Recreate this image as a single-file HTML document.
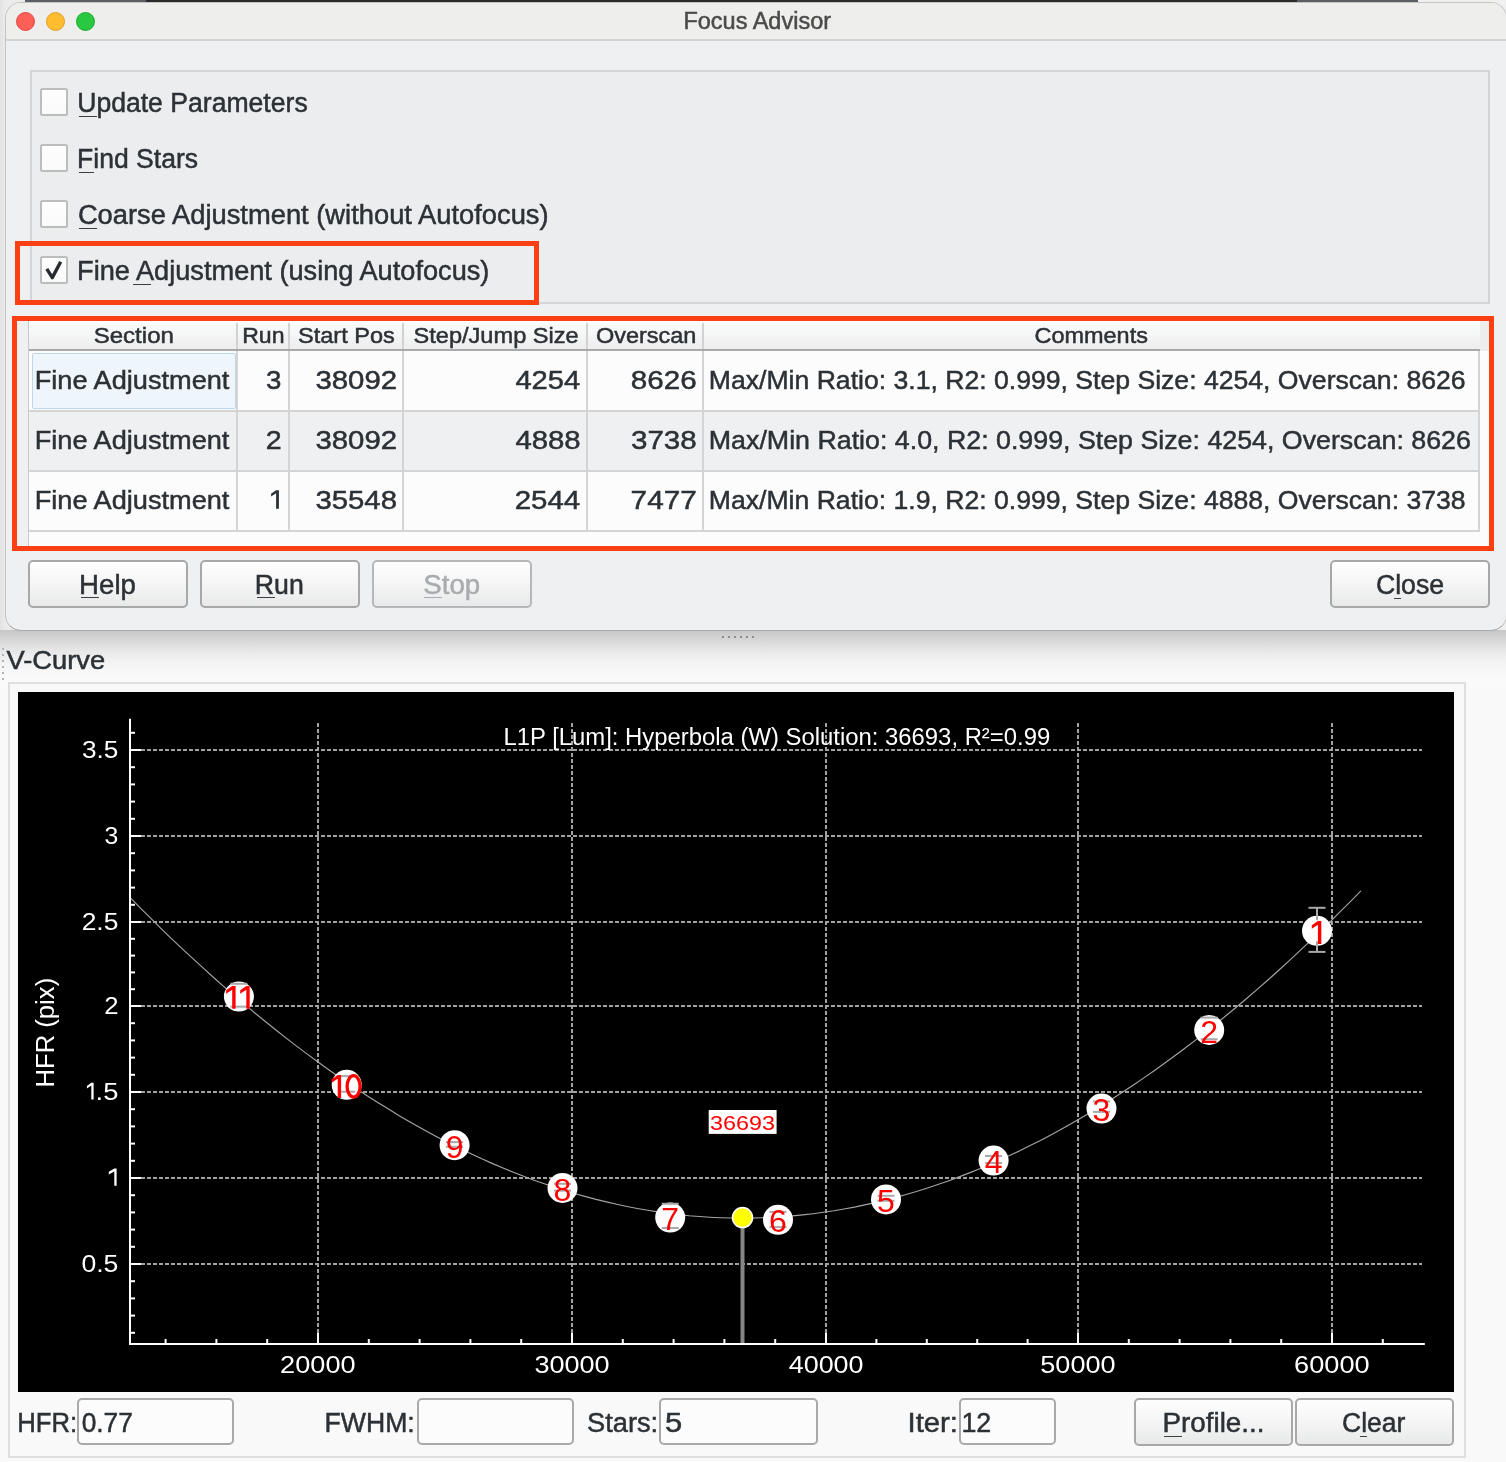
<!DOCTYPE html>
<html><head><meta charset="utf-8"><title>Focus Advisor</title>
<style>
html,body{margin:0;padding:0;width:1506px;height:1462px;overflow:hidden;background:#f9f9f9;font-family:"Liberation Sans",sans-serif;position:relative}
div{position:absolute;box-sizing:border-box}
.desk{left:0;top:0;width:1506px;height:640px;background:linear-gradient(90deg,#e2e2e2,#ebebeb 5px,#f0f0f0)}
.topstrip{left:146px;top:0;width:1151px;height:2.5px;background:#2a2a2a}
.topstrip2{left:1297px;top:0;width:121px;height:2.5px;background:#5a5d62}
.shadow{left:0;top:630px;width:1506px;height:62px;background:linear-gradient(180deg,#c6c6c6 0,#cacaca 2px,#d6d6d6 10px,#e4e4e4 18px,#ededed 26px,#f4f4f4 34px,#f8f8f8 42px,#fafafa 50px,#f9f9f9 62px)}
.win{left:5px;top:2px;width:1502px;height:629px;background:#eff0f2;border:1px solid #c4c4c4;border-bottom:1.5px solid #a9a9a9;border-radius:16px;overflow:hidden}
.titlebar{left:0;top:0;width:100%;height:38px;border-bottom:2px solid #d2d2d2;background:#eeeeec}
.tl{width:19px;height:19px;border-radius:50%;top:8.5px}
.group{left:30px;top:70px;width:1460px;height:234px;background:#ecedef;border:2px solid #d4d5d7;border-right-color:#d2d3d5}
.cb{width:28px;height:28px;background:linear-gradient(#fdfdfd,#fafafa);border:2px solid #bcbebd;border-radius:2.5px}
.red{border:5px solid #fd3f14}
.table{left:28px;top:321px;width:1461px;height:225px;background:#fcfcfc;border-left:1.5px solid #c9c9c9}
.hdr{top:0;height:30px;background:linear-gradient(#fafbfb,#f5f6f6 45%,#ededee);border-bottom:2px solid #a9a9a9}
.hsep{top:2px;width:2px;height:26px;background:#d2d2d2}
.row2{left:0;top:90px;width:1461px;height:60px;background:#eff0f2}
.hline{height:1.5px;background:#d4d4d4}
.vline{width:1.5px;background:#d4d4d4}
.btn{height:47.5px;border:2px solid #a8a8a8;border-radius:5px;background:linear-gradient(#fefefe,#f6f6f6 45%,#e8e9ea)}
.btn.dis{border-color:#b5b7b8}
.inp{height:47px;border:2px solid #a9a9a9;border-radius:5px;background:#fcfcfc}
.frame{left:8px;top:682px;width:1458px;height:776px;border:2px solid #dfdfdf;background:#f9f9f9}
.plot{left:18px;top:692px;width:1436px;height:700px;background:#000}
.ul{height:1.3px;background:#3a3f44}
svg{position:absolute;left:0;top:0;will-change:transform}
text{font-family:"Liberation Sans",sans-serif}
</style></head><body>
<div class="desk"></div>
<div class="shadow"></div>
<div class="topstrip"></div><div class="topstrip2"></div><div class="topstrip2" style="left:25px;width:121px"></div>
<div class="win">
  <div class="titlebar"></div>
  <div class="tl" style="left:9.5px;background:#fe5f57;border:1px solid #e2463f"></div>
  <div class="tl" style="left:39.5px;background:#febc2e;border:1px solid #e0a02a"></div>
  <div class="tl" style="left:69.5px;background:#28c840;border:1px solid #1eaa32"></div>
</div>
<div class="group"></div>
<div class="cb" style="left:40px;top:88px"></div>
<div class="cb" style="left:40px;top:144px"></div>
<div class="cb" style="left:40px;top:200px"></div>
<div class="cb" style="left:40px;top:256px"></div>
<div class="red" style="left:15px;top:241px;width:524px;height:64px"></div>

<div class="table">
  <div class="row2" style="width:1450px"></div>
  <div class="hdr" style="left:0;width:1451px"></div>
  <div class="hdr" style="left:1451px;width:10px;background:#ededee;border-bottom:none"></div>
  <div class="hsep" style="left:207px"></div>
  <div class="hsep" style="left:259px"></div>
  <div class="hsep" style="left:373px"></div>
  <div class="hsep" style="left:557px"></div>
  <div class="hsep" style="left:673px"></div>
  <div class="hline" style="left:0;top:89px;width:1451px"></div>
  <div class="hline" style="left:0;top:149px;width:1451px"></div>
  <div class="hline" style="left:0;top:209px;width:1451px"></div>
  <div class="vline" style="left:207px;top:30px;height:180px"></div>
  <div class="vline" style="left:259px;top:30px;height:180px"></div>
  <div class="vline" style="left:373px;top:30px;height:180px"></div>
  <div class="vline" style="left:557px;top:30px;height:180px"></div>
  <div class="vline" style="left:673px;top:30px;height:180px"></div>
  <div class="vline" style="left:1449px;top:30px;height:180px"></div>
  <div style="left:3px;top:32px;width:204px;height:56px;border:1.5px solid #b9d9ea;background:#eef5fb;border-radius:2px"></div>
</div>
<div class="red" style="left:12px;top:316px;width:1482px;height:235px"></div>

<div class="btn" style="left:28px;top:560px;width:160px"></div>
<div class="btn" style="left:200px;top:560px;width:160px"></div>
<div class="btn dis" style="left:372px;top:560px;width:160px"></div>
<div class="btn" style="left:1330px;top:560px;width:160px"></div>
<div class="ul" style="left:81px;top:597px;width:18px"></div>
<div class="ul" style="left:257px;top:597px;width:18px"></div>
<div class="ul" style="left:424px;top:597px;width:18px;background:#a9acaf"></div>
<div class="ul" style="left:1394px;top:598px;width:7px"></div>

<div class="ul" style="left:79px;top:116px;width:18px"></div>
<div class="ul" style="left:79px;top:172px;width:15px"></div>
<div class="ul" style="left:79px;top:228px;width:18px"></div>
<div class="ul" style="left:133px;top:284px;width:18px"></div>

<div style="left:722px;top:636px;width:32px;height:2px;background:repeating-linear-gradient(90deg,#8e8e8e 0 2px,transparent 2px 6px)"></div>
<div style="left:2px;top:648px;width:2px;height:33px;background:repeating-linear-gradient(180deg,#b5b5b5 0 2px,transparent 2px 6px)"></div>

<div class="frame"></div>
<div class="plot"></div>

<div class="inp" style="left:76.5px;top:1398px;width:157px"></div>
<div class="inp" style="left:416.5px;top:1398px;width:157px"></div>
<div class="inp" style="left:658.5px;top:1398px;width:159px"></div>
<div class="inp" style="left:958.5px;top:1398px;width:97px"></div>
<div class="btn" style="left:1134px;top:1398px;width:159px"></div>
<div class="btn" style="left:1294.5px;top:1398px;width:159px"></div>
<div class="ul" style="left:1164px;top:1436px;width:18px"></div>
<div class="ul" style="left:1360px;top:1436px;width:7px"></div>

<svg width="1506" height="1462" viewBox="0 0 1506 1462">
<g id="chart">
<line x1="318.0" y1="723" x2="318.0" y2="1333" stroke="#a3a3a3" stroke-width="2" stroke-dasharray="4 2"/>
<line x1="572.0" y1="723" x2="572.0" y2="1333" stroke="#a3a3a3" stroke-width="2" stroke-dasharray="4 2"/>
<line x1="826.0" y1="723" x2="826.0" y2="1333" stroke="#a3a3a3" stroke-width="2" stroke-dasharray="4 2"/>
<line x1="1078.0" y1="723" x2="1078.0" y2="1333" stroke="#a3a3a3" stroke-width="2" stroke-dasharray="4 2"/>
<line x1="1332.0" y1="723" x2="1332.0" y2="1333" stroke="#a3a3a3" stroke-width="2" stroke-dasharray="4 2"/>
<line x1="141" y1="1264.0" x2="1422" y2="1264.0" stroke="#a3a3a3" stroke-width="2" stroke-dasharray="4 2"/>
<line x1="141" y1="1178.0" x2="1422" y2="1178.0" stroke="#a3a3a3" stroke-width="2" stroke-dasharray="4 2"/>
<line x1="141" y1="1092.0" x2="1422" y2="1092.0" stroke="#a3a3a3" stroke-width="2" stroke-dasharray="4 2"/>
<line x1="141" y1="1006.0" x2="1422" y2="1006.0" stroke="#a3a3a3" stroke-width="2" stroke-dasharray="4 2"/>
<line x1="141" y1="922.0" x2="1422" y2="922.0" stroke="#a3a3a3" stroke-width="2" stroke-dasharray="4 2"/>
<line x1="141" y1="836.0" x2="1422" y2="836.0" stroke="#a3a3a3" stroke-width="2" stroke-dasharray="4 2"/>
<line x1="141" y1="750.0" x2="1422" y2="750.0" stroke="#a3a3a3" stroke-width="2" stroke-dasharray="4 2"/>
<line x1="130" y1="718.8" x2="130" y2="1345" stroke="#fff" stroke-width="2"/>
<line x1="129" y1="1344" x2="1424.8" y2="1344" stroke="#fff" stroke-width="2"/>
<line x1="130" y1="1332.8" x2="135" y2="1332.8" stroke="#fff" stroke-width="2"/>
<line x1="130" y1="1315.6" x2="135" y2="1315.6" stroke="#fff" stroke-width="2"/>
<line x1="130" y1="1298.4" x2="135" y2="1298.4" stroke="#fff" stroke-width="2"/>
<line x1="130" y1="1281.2" x2="135" y2="1281.2" stroke="#fff" stroke-width="2"/>
<line x1="130" y1="1264.0" x2="141" y2="1264.0" stroke="#fff" stroke-width="2"/>
<line x1="130" y1="1246.8" x2="135" y2="1246.8" stroke="#fff" stroke-width="2"/>
<line x1="130" y1="1229.6" x2="135" y2="1229.6" stroke="#fff" stroke-width="2"/>
<line x1="130" y1="1212.4" x2="135" y2="1212.4" stroke="#fff" stroke-width="2"/>
<line x1="130" y1="1195.2" x2="135" y2="1195.2" stroke="#fff" stroke-width="2"/>
<line x1="130" y1="1178.0" x2="141" y2="1178.0" stroke="#fff" stroke-width="2"/>
<line x1="130" y1="1160.8" x2="135" y2="1160.8" stroke="#fff" stroke-width="2"/>
<line x1="130" y1="1143.6" x2="135" y2="1143.6" stroke="#fff" stroke-width="2"/>
<line x1="130" y1="1126.4" x2="135" y2="1126.4" stroke="#fff" stroke-width="2"/>
<line x1="130" y1="1109.2" x2="135" y2="1109.2" stroke="#fff" stroke-width="2"/>
<line x1="130" y1="1092.0" x2="141" y2="1092.0" stroke="#fff" stroke-width="2"/>
<line x1="130" y1="1074.8" x2="135" y2="1074.8" stroke="#fff" stroke-width="2"/>
<line x1="130" y1="1057.6" x2="135" y2="1057.6" stroke="#fff" stroke-width="2"/>
<line x1="130" y1="1040.4" x2="135" y2="1040.4" stroke="#fff" stroke-width="2"/>
<line x1="130" y1="1023.2" x2="135" y2="1023.2" stroke="#fff" stroke-width="2"/>
<line x1="130" y1="1006.0" x2="141" y2="1006.0" stroke="#fff" stroke-width="2"/>
<line x1="130" y1="989.2" x2="135" y2="989.2" stroke="#fff" stroke-width="2"/>
<line x1="130" y1="972.4" x2="135" y2="972.4" stroke="#fff" stroke-width="2"/>
<line x1="130" y1="955.6" x2="135" y2="955.6" stroke="#fff" stroke-width="2"/>
<line x1="130" y1="938.8" x2="135" y2="938.8" stroke="#fff" stroke-width="2"/>
<line x1="130" y1="922.0" x2="141" y2="922.0" stroke="#fff" stroke-width="2"/>
<line x1="130" y1="904.8" x2="135" y2="904.8" stroke="#fff" stroke-width="2"/>
<line x1="130" y1="887.6" x2="135" y2="887.6" stroke="#fff" stroke-width="2"/>
<line x1="130" y1="870.4" x2="135" y2="870.4" stroke="#fff" stroke-width="2"/>
<line x1="130" y1="853.2" x2="135" y2="853.2" stroke="#fff" stroke-width="2"/>
<line x1="130" y1="836.0" x2="141" y2="836.0" stroke="#fff" stroke-width="2"/>
<line x1="130" y1="818.8" x2="135" y2="818.8" stroke="#fff" stroke-width="2"/>
<line x1="130" y1="801.6" x2="135" y2="801.6" stroke="#fff" stroke-width="2"/>
<line x1="130" y1="784.4" x2="135" y2="784.4" stroke="#fff" stroke-width="2"/>
<line x1="130" y1="767.2" x2="135" y2="767.2" stroke="#fff" stroke-width="2"/>
<line x1="130" y1="750.0" x2="141" y2="750.0" stroke="#fff" stroke-width="2"/>
<line x1="130" y1="732.8" x2="135" y2="732.8" stroke="#fff" stroke-width="2"/>
<line x1="165.6" y1="1344" x2="165.6" y2="1339" stroke="#fff" stroke-width="2"/>
<line x1="216.4" y1="1344" x2="216.4" y2="1339" stroke="#fff" stroke-width="2"/>
<line x1="267.2" y1="1344" x2="267.2" y2="1339" stroke="#fff" stroke-width="2"/>
<line x1="318.0" y1="1344" x2="318.0" y2="1333" stroke="#fff" stroke-width="2"/>
<line x1="368.8" y1="1344" x2="368.8" y2="1339" stroke="#fff" stroke-width="2"/>
<line x1="419.6" y1="1344" x2="419.6" y2="1339" stroke="#fff" stroke-width="2"/>
<line x1="470.4" y1="1344" x2="470.4" y2="1339" stroke="#fff" stroke-width="2"/>
<line x1="521.2" y1="1344" x2="521.2" y2="1339" stroke="#fff" stroke-width="2"/>
<line x1="572.0" y1="1344" x2="572.0" y2="1333" stroke="#fff" stroke-width="2"/>
<line x1="622.8" y1="1344" x2="622.8" y2="1339" stroke="#fff" stroke-width="2"/>
<line x1="673.6" y1="1344" x2="673.6" y2="1339" stroke="#fff" stroke-width="2"/>
<line x1="724.4" y1="1344" x2="724.4" y2="1339" stroke="#fff" stroke-width="2"/>
<line x1="775.2" y1="1344" x2="775.2" y2="1339" stroke="#fff" stroke-width="2"/>
<line x1="826.0" y1="1344" x2="826.0" y2="1333" stroke="#fff" stroke-width="2"/>
<line x1="876.4" y1="1344" x2="876.4" y2="1339" stroke="#fff" stroke-width="2"/>
<line x1="926.8" y1="1344" x2="926.8" y2="1339" stroke="#fff" stroke-width="2"/>
<line x1="977.2" y1="1344" x2="977.2" y2="1339" stroke="#fff" stroke-width="2"/>
<line x1="1027.6" y1="1344" x2="1027.6" y2="1339" stroke="#fff" stroke-width="2"/>
<line x1="1078.0" y1="1344" x2="1078.0" y2="1333" stroke="#fff" stroke-width="2"/>
<line x1="1128.8" y1="1344" x2="1128.8" y2="1339" stroke="#fff" stroke-width="2"/>
<line x1="1179.6" y1="1344" x2="1179.6" y2="1339" stroke="#fff" stroke-width="2"/>
<line x1="1230.4" y1="1344" x2="1230.4" y2="1339" stroke="#fff" stroke-width="2"/>
<line x1="1281.2" y1="1344" x2="1281.2" y2="1339" stroke="#fff" stroke-width="2"/>
<line x1="1332.0" y1="1344" x2="1332.0" y2="1333" stroke="#fff" stroke-width="2"/>
<line x1="1382.8" y1="1344" x2="1382.8" y2="1339" stroke="#fff" stroke-width="2"/>
<text x="82.0" y="758.1" font-size="23.5" fill="#fff" textLength="36.4" lengthAdjust="spacingAndGlyphs">3.5</text>
<text x="104.6" y="844.1" font-size="23.5" fill="#fff" textLength="13.8" lengthAdjust="spacingAndGlyphs">3</text>
<text x="81.7" y="930.1" font-size="23.5" fill="#fff" textLength="36.7" lengthAdjust="spacingAndGlyphs">2.5</text>
<text x="104.3" y="1014.1" font-size="23.5" fill="#fff" textLength="14.3" lengthAdjust="spacingAndGlyphs">2</text>
<text x="95.6" y="1100.1" font-size="23.5" fill="#fff" textLength="22.8" lengthAdjust="spacingAndGlyphs">.5</text>
<text x="81.4" y="1272.1" font-size="23.5" fill="#fff" textLength="37.0" lengthAdjust="spacingAndGlyphs">0.5</text>
<text x="280.1" y="1372.6" font-size="24" fill="#fff" textLength="75.5" lengthAdjust="spacingAndGlyphs">20000</text>
<text x="534.4" y="1372.6" font-size="24" fill="#fff" textLength="75.3" lengthAdjust="spacingAndGlyphs">30000</text>
<text x="788.7" y="1372.6" font-size="24" fill="#fff" textLength="74.9" lengthAdjust="spacingAndGlyphs">40000</text>
<text x="1040.3" y="1372.6" font-size="24" fill="#fff" textLength="75.3" lengthAdjust="spacingAndGlyphs">50000</text>
<text x="1294.1" y="1372.6" font-size="24" fill="#fff" textLength="75.6" lengthAdjust="spacingAndGlyphs">60000</text>
<polyline points="130.9,898.4 141.2,908.9 151.6,919.2 161.9,929.3 172.2,939.3 182.6,949.1 192.9,958.7 203.3,968.2 213.6,977.5 223.9,986.6 234.3,995.6 244.6,1004.4 254.9,1013.0 265.3,1021.5 275.6,1029.8 285.9,1037.9 296.3,1045.9 306.6,1053.6 317.0,1061.3 327.3,1068.7 337.6,1076.0 348.0,1083.0 358.3,1090.0 368.6,1096.7 379.0,1103.3 389.3,1109.6 399.6,1115.9 410.0,1121.9 420.3,1127.7 430.6,1133.4 441.0,1138.9 451.3,1144.2 461.7,1149.3 472.0,1154.3 482.3,1159.1 492.7,1163.6 503.0,1168.0 513.3,1172.3 523.7,1176.3 534.0,1180.2 544.3,1183.8 554.7,1187.3 565.0,1190.6 575.4,1193.7 585.7,1196.6 596.0,1199.4 606.4,1201.9 616.7,1204.3 627.0,1206.5 637.4,1208.5 647.7,1210.3 658.0,1211.9 668.4,1213.4 678.7,1214.6 689.1,1215.7 699.4,1216.5 709.7,1217.2 720.1,1217.7 730.4,1218.0 740.7,1218.1 751.1,1218.1 761.4,1217.8 771.7,1217.4 782.1,1216.7 792.4,1215.9 802.7,1214.9 813.1,1213.7 823.4,1212.3 833.8,1210.8 844.1,1209.0 854.4,1207.1 864.8,1204.9 875.1,1202.6 885.4,1200.1 895.8,1197.4 906.1,1194.5 916.4,1191.5 926.8,1188.2 937.1,1184.8 947.5,1181.2 957.8,1177.4 968.1,1173.4 978.5,1169.2 988.8,1164.9 999.1,1160.3 1009.5,1155.6 1019.8,1150.7 1030.1,1145.6 1040.5,1140.4 1050.8,1134.9 1061.2,1129.3 1071.5,1123.5 1081.8,1117.5 1092.2,1111.4 1102.5,1105.0 1112.8,1098.5 1123.2,1091.8 1133.5,1085.0 1143.8,1077.9 1154.2,1070.7 1164.5,1063.3 1174.8,1055.7 1185.2,1048.0 1195.5,1040.1 1205.9,1032.0 1216.2,1023.8 1226.5,1015.3 1236.9,1006.8 1247.2,998.0 1257.5,989.1 1267.9,980.0 1278.2,970.7 1288.5,961.3 1298.9,951.7 1309.2,941.9 1319.6,932.0 1329.9,922.0 1340.2,911.7 1350.6,901.3 1360.9,890.8" fill="none" stroke="#a4a4a4" stroke-width="1.15"/>
<line x1="742.5" y1="1217.6" x2="742.5" y2="1343" stroke="#858585" stroke-width="4"/>
<line x1="1317" y1="907.8" x2="1317" y2="920.3" stroke="#a9a9a9" stroke-width="2"/>
<line x1="1317" y1="941.3" x2="1317" y2="951.9" stroke="#a9a9a9" stroke-width="2"/>
<circle cx="1317" cy="930.8" r="15" fill="#fff"/>
<line x1="1317" y1="915.8" x2="1317" y2="920.3" stroke="#a9a9a9" stroke-width="2"/>
<line x1="1317" y1="941.3" x2="1317" y2="945.8" stroke="#a9a9a9" stroke-width="2"/>
<line x1="1308.5" y1="907.8" x2="1325.5" y2="907.8" stroke="#a9a9a9" stroke-width="2"/>
<line x1="1308.5" y1="951.9" x2="1325.5" y2="951.9" stroke="#a9a9a9" stroke-width="2"/>
<path d="M1317.90 920.90L1321.30 920.90L1321.30 943.90L1317.90 943.90L1317.90 924.70L1311.80 928.70L1311.80 925.20Z" fill="#ff0000"/>
<line x1="1209.2" y1="1017.6" x2="1209.2" y2="1019.5" stroke="#a9a9a9" stroke-width="2"/>
<circle cx="1209.2" cy="1030" r="15" fill="#fff"/>
<line x1="1200.7" y1="1017.6" x2="1217.7" y2="1017.6" stroke="#a9a9a9" stroke-width="2"/>
<line x1="1200.7" y1="1039.2" x2="1217.7" y2="1039.2" stroke="#a9a9a9" stroke-width="2"/>
<text x="1209.2" y="1042.6" font-size="32" fill="#ff0000" text-anchor="middle">2</text>
<circle cx="1101.5" cy="1108.6" r="15" fill="#fff"/>
<line x1="1093.0" y1="1101.5" x2="1110.0" y2="1101.5" stroke="#a9a9a9" stroke-width="2"/>
<line x1="1093.0" y1="1111.9" x2="1110.0" y2="1111.9" stroke="#a9a9a9" stroke-width="2"/>
<text x="1101.5" y="1121.2" font-size="32" fill="#ff0000" text-anchor="middle">3</text>
<circle cx="993.6" cy="1160.6" r="15" fill="#fff"/>
<line x1="985.1" y1="1156" x2="1002.1" y2="1156" stroke="#a9a9a9" stroke-width="2"/>
<line x1="985.1" y1="1163" x2="1002.1" y2="1163" stroke="#a9a9a9" stroke-width="2"/>
<text x="993.6" y="1173.2" font-size="32" fill="#ff0000" text-anchor="middle">4</text>
<circle cx="886" cy="1199.4" r="15" fill="#fff"/>
<line x1="877.5" y1="1195.8" x2="894.5" y2="1195.8" stroke="#a9a9a9" stroke-width="2"/>
<line x1="877.5" y1="1200.8" x2="894.5" y2="1200.8" stroke="#a9a9a9" stroke-width="2"/>
<text x="886.0" y="1212.0" font-size="32" fill="#ff0000" text-anchor="middle">5</text>
<circle cx="778" cy="1219.8" r="15" fill="#fff"/>
<line x1="769.5" y1="1211.9" x2="786.5" y2="1211.9" stroke="#a9a9a9" stroke-width="2"/>
<line x1="769.5" y1="1227.1" x2="786.5" y2="1227.1" stroke="#a9a9a9" stroke-width="2"/>
<text x="778.0" y="1232.4" font-size="32" fill="#ff0000" text-anchor="middle">6</text>
<line x1="670.2" y1="1203.8" x2="670.2" y2="1207.1" stroke="#a9a9a9" stroke-width="2"/>
<circle cx="670.2" cy="1217.6" r="15" fill="#fff"/>
<line x1="661.7" y1="1203.8" x2="678.7" y2="1203.8" stroke="#a9a9a9" stroke-width="2"/>
<line x1="661.7" y1="1228" x2="678.7" y2="1228" stroke="#a9a9a9" stroke-width="2"/>
<text x="670.2" y="1230.2" font-size="32" fill="#ff0000" text-anchor="middle">7</text>
<circle cx="562.5" cy="1188" r="15" fill="#fff"/>
<line x1="554.0" y1="1183.8" x2="571.0" y2="1183.8" stroke="#a9a9a9" stroke-width="2"/>
<line x1="554.0" y1="1190.7" x2="571.0" y2="1190.7" stroke="#a9a9a9" stroke-width="2"/>
<text x="562.5" y="1200.6" font-size="32" fill="#ff0000" text-anchor="middle">8</text>
<circle cx="454.6" cy="1145.2" r="15" fill="#fff"/>
<line x1="446.1" y1="1142.1" x2="463.1" y2="1142.1" stroke="#a9a9a9" stroke-width="2"/>
<line x1="446.1" y1="1146.8" x2="463.1" y2="1146.8" stroke="#a9a9a9" stroke-width="2"/>
<text x="454.6" y="1157.8" font-size="32" fill="#ff0000" text-anchor="middle">9</text>
<circle cx="346.7" cy="1084.8" r="15" fill="#fff"/>
<line x1="338.2" y1="1076.1" x2="355.2" y2="1076.1" stroke="#a9a9a9" stroke-width="2"/>
<line x1="338.2" y1="1091.7" x2="355.2" y2="1091.7" stroke="#a9a9a9" stroke-width="2"/>
<path d="M337.70 1075.00L341.10 1075.00L341.10 1097.90L337.70 1097.90L337.70 1078.78L331.60 1082.77L331.60 1079.28Z" fill="#ff0000"/>
<ellipse cx="353.6" cy="1086.4" rx="6.5" ry="10.7" fill="none" stroke="#ff0000" stroke-width="3.3"/>
<line x1="238.9" y1="983.8" x2="238.9" y2="986.1" stroke="#a9a9a9" stroke-width="2"/>
<circle cx="238.9" cy="996.6" r="15" fill="#fff"/>
<line x1="230.4" y1="983.8" x2="247.4" y2="983.8" stroke="#a9a9a9" stroke-width="2"/>
<line x1="230.4" y1="1006.7" x2="247.4" y2="1006.7" stroke="#a9a9a9" stroke-width="2"/>
<path d="M232.20 986.00L235.60 986.00L235.60 1008.80L232.20 1008.80L232.20 989.77L226.10 993.73L226.10 990.26Z" fill="#ff0000"/>
<path d="M246.30 986.00L249.70 986.00L249.70 1008.80L246.30 1008.80L246.30 989.77L240.20 993.73L240.20 990.26Z" fill="#ff0000"/>
<circle cx="742.5" cy="1217.6" r="10" fill="#ffff00" stroke="#fff" stroke-width="1.5"/>
<rect x="708.7" y="1110" width="67.9" height="23.9" fill="#fff"/>
<path d="M114.30 1168.60L116.60 1168.60L116.60 1185.80L114.30 1185.80L114.30 1171.44L108.80 1174.43L108.80 1171.82Z" fill="#fff"/>
<path d="M91.30 1082.80L93.60 1082.80L93.60 1099.60L91.30 1099.60L91.30 1085.58L86.90 1088.50L86.90 1085.94Z" fill="#fff"/>
<text x="503.5" y="745.0" font-size="23.5" fill="#fff" textLength="546.7" lengthAdjust="spacingAndGlyphs">L1P [Lum]: Hyperbola (W) Solution: 36693, R²=0.99</text>
<text x="710.0" y="1129.8" font-size="20" fill="#ff0000" textLength="64.9" lengthAdjust="spacingAndGlyphs">36693</text>
<g transform="translate(54,1085.4) rotate(-90)"><text x="-2.2" y="0.0" font-size="26.5" fill="#fff" textLength="109.8" lengthAdjust="spacingAndGlyphs">HFR (pix)</text></g>
</g>
<g id="texts">
<text x="683.4" y="28.7" font-size="23" fill="#4b4b4b" stroke="#4b4b4b" stroke-width="0.5" textLength="147.7" lengthAdjust="spacingAndGlyphs">Focus Advisor</text>
<text x="77.2" y="112.0" font-size="27" fill="#2c3136" stroke="#2c3136" stroke-width="0.5" textLength="230.5" lengthAdjust="spacingAndGlyphs">Update Parameters</text>
<text x="77.1" y="168.0" font-size="27" fill="#2c3136" stroke="#2c3136" stroke-width="0.5" textLength="120.9" lengthAdjust="spacingAndGlyphs">Find Stars</text>
<text x="77.9" y="224.0" font-size="27" fill="#2c3136" stroke="#2c3136" stroke-width="0.5" textLength="470.7" lengthAdjust="spacingAndGlyphs">Coarse Adjustment (without Autofocus)</text>
<text x="77.1" y="280.0" font-size="27" fill="#2c3136" stroke="#2c3136" stroke-width="0.5" textLength="412.3" lengthAdjust="spacingAndGlyphs">Fine Adjustment (using Autofocus)</text>
<text x="93.7" y="342.9" font-size="22.5" fill="#2c3136" stroke="#2c3136" stroke-width="0.5" textLength="80.2" lengthAdjust="spacingAndGlyphs">Section</text>
<text x="242.2" y="342.9" font-size="22.5" fill="#2c3136" stroke="#2c3136" stroke-width="0.5" textLength="42.3" lengthAdjust="spacingAndGlyphs">Run</text>
<text x="298.0" y="342.9" font-size="22.5" fill="#2c3136" stroke="#2c3136" stroke-width="0.5" textLength="96.8" lengthAdjust="spacingAndGlyphs">Start Pos</text>
<text x="413.5" y="342.9" font-size="22.5" fill="#2c3136" stroke="#2c3136" stroke-width="0.5" textLength="165.2" lengthAdjust="spacingAndGlyphs">Step/Jump Size</text>
<text x="595.9" y="342.9" font-size="22.5" fill="#2c3136" stroke="#2c3136" stroke-width="0.5" textLength="100.5" lengthAdjust="spacingAndGlyphs">Overscan</text>
<text x="1034.5" y="342.9" font-size="22.5" fill="#2c3136" stroke="#2c3136" stroke-width="0.5" textLength="113.4" lengthAdjust="spacingAndGlyphs">Comments</text>
<text x="34.7" y="389.4" font-size="26.5" fill="#2c3136" stroke="#2c3136" stroke-width="0.5" textLength="194.7" lengthAdjust="spacingAndGlyphs">Fine Adjustment</text>
<text x="266.0" y="389.4" font-size="26.5" fill="#2c3136" stroke="#2c3136" stroke-width="0.5" textLength="15.4" lengthAdjust="spacingAndGlyphs">3</text>
<text x="315.4" y="389.4" font-size="26.5" fill="#2c3136" stroke="#2c3136" stroke-width="0.5" textLength="81.7" lengthAdjust="spacingAndGlyphs">38092</text>
<text x="515.4" y="389.4" font-size="26.5" fill="#2c3136" stroke="#2c3136" stroke-width="0.5" textLength="64.8" lengthAdjust="spacingAndGlyphs">4254</text>
<text x="630.8" y="389.4" font-size="26.5" fill="#2c3136" stroke="#2c3136" stroke-width="0.5" textLength="65.8" lengthAdjust="spacingAndGlyphs">8626</text>
<text x="708.8" y="389.4" font-size="26.5" fill="#2c3136" stroke="#2c3136" stroke-width="0.5" textLength="756.8" lengthAdjust="spacingAndGlyphs">Max/Min Ratio: 3.1, R2: 0.999, Step Size: 4254, Overscan: 8626</text>
<text x="34.7" y="449.2" font-size="26.5" fill="#2c3136" stroke="#2c3136" stroke-width="0.5" textLength="194.7" lengthAdjust="spacingAndGlyphs">Fine Adjustment</text>
<text x="265.7" y="449.2" font-size="26.5" fill="#2c3136" stroke="#2c3136" stroke-width="0.5" textLength="15.9" lengthAdjust="spacingAndGlyphs">2</text>
<text x="315.4" y="449.2" font-size="26.5" fill="#2c3136" stroke="#2c3136" stroke-width="0.5" textLength="81.7" lengthAdjust="spacingAndGlyphs">38092</text>
<text x="515.4" y="449.2" font-size="26.5" fill="#2c3136" stroke="#2c3136" stroke-width="0.5" textLength="65.2" lengthAdjust="spacingAndGlyphs">4888</text>
<text x="631.0" y="449.2" font-size="26.5" fill="#2c3136" stroke="#2c3136" stroke-width="0.5" textLength="65.7" lengthAdjust="spacingAndGlyphs">3738</text>
<text x="708.8" y="449.2" font-size="26.5" fill="#2c3136" stroke="#2c3136" stroke-width="0.5" textLength="762.1" lengthAdjust="spacingAndGlyphs">Max/Min Ratio: 4.0, R2: 0.999, Step Size: 4254, Overscan: 8626</text>
<text x="34.7" y="509.0" font-size="26.5" fill="#2c3136" stroke="#2c3136" stroke-width="0.5" textLength="194.7" lengthAdjust="spacingAndGlyphs">Fine Adjustment</text>
<path d="M276.10 490.30L278.90 490.30L278.90 508.70L276.10 508.70L276.10 493.34L271.10 496.54L271.10 493.74Z" fill="#2c3136"/>
<text x="315.4" y="509.0" font-size="26.5" fill="#2c3136" stroke="#2c3136" stroke-width="0.5" textLength="81.6" lengthAdjust="spacingAndGlyphs">35548</text>
<text x="514.7" y="509.0" font-size="26.5" fill="#2c3136" stroke="#2c3136" stroke-width="0.5" textLength="65.5" lengthAdjust="spacingAndGlyphs">2544</text>
<text x="630.6" y="509.0" font-size="26.5" fill="#2c3136" stroke="#2c3136" stroke-width="0.5" textLength="66.2" lengthAdjust="spacingAndGlyphs">7477</text>
<text x="708.8" y="509.0" font-size="26.5" fill="#2c3136" stroke="#2c3136" stroke-width="0.5" textLength="756.8" lengthAdjust="spacingAndGlyphs">Max/Min Ratio: 1.9, R2: 0.999, Step Size: 4888, Overscan: 3738</text>
<text x="79.1" y="593.6" font-size="27" fill="#2c3136" stroke="#2c3136" stroke-width="0.5" textLength="56.8" lengthAdjust="spacingAndGlyphs">Help</text>
<text x="254.8" y="593.6" font-size="27" fill="#2c3136" stroke="#2c3136" stroke-width="0.5" textLength="49.0" lengthAdjust="spacingAndGlyphs">Run</text>
<text x="423.3" y="593.6" font-size="27" fill="#a9acaf" stroke="#a9acaf" stroke-width="0.5" textLength="56.9" lengthAdjust="spacingAndGlyphs">Stop</text>
<text x="1375.9" y="594.2" font-size="27" fill="#2c3136" stroke="#2c3136" stroke-width="0.5" textLength="68.3" lengthAdjust="spacingAndGlyphs">Close</text>
<text x="6.5" y="668.7" font-size="25" fill="#2c3136" stroke="#2c3136" stroke-width="0.5" textLength="98.6" lengthAdjust="spacingAndGlyphs">V-Curve</text>
<text x="17.3" y="1431.8" font-size="27" fill="#2c3136" stroke="#2c3136" stroke-width="0.5" textLength="59.9" lengthAdjust="spacingAndGlyphs">HFR:</text>
<text x="81.7" y="1431.8" font-size="27" fill="#2c3136" stroke="#2c3136" stroke-width="0.5" textLength="51.2" lengthAdjust="spacingAndGlyphs">0.77</text>
<text x="324.6" y="1431.8" font-size="27" fill="#2c3136" stroke="#2c3136" stroke-width="0.5" textLength="90.1" lengthAdjust="spacingAndGlyphs">FWHM:</text>
<text x="587.1" y="1431.8" font-size="27" fill="#2c3136" stroke="#2c3136" stroke-width="0.5" textLength="71.1" lengthAdjust="spacingAndGlyphs">Stars:</text>
<text x="664.9" y="1431.8" font-size="27" fill="#2c3136" stroke="#2c3136" stroke-width="0.5" textLength="17.2" lengthAdjust="spacingAndGlyphs">5</text>
<text x="907.5" y="1431.8" font-size="27" fill="#2c3136" stroke="#2c3136" stroke-width="0.5" textLength="50.5" lengthAdjust="spacingAndGlyphs">Iter:</text>
<text x="961.4" y="1431.8" font-size="27" fill="#2c3136" stroke="#2c3136" stroke-width="0.5" textLength="29.9" lengthAdjust="spacingAndGlyphs">12</text>
<text x="1162.5" y="1431.8" font-size="27" fill="#2c3136" stroke="#2c3136" stroke-width="0.5" textLength="102.0" lengthAdjust="spacingAndGlyphs">Profile...</text>
<text x="1342.0" y="1431.8" font-size="27" fill="#2c3136" stroke="#2c3136" stroke-width="0.5" textLength="63.4" lengthAdjust="spacingAndGlyphs">Clear</text>
</g>
<path d="M46.8 268.8 L52.3 277.6 L60.7 261.8" fill="none" stroke="#272b30" stroke-width="3.4" stroke-linecap="butt" stroke-linejoin="round"/>
</svg>
</body></html>
